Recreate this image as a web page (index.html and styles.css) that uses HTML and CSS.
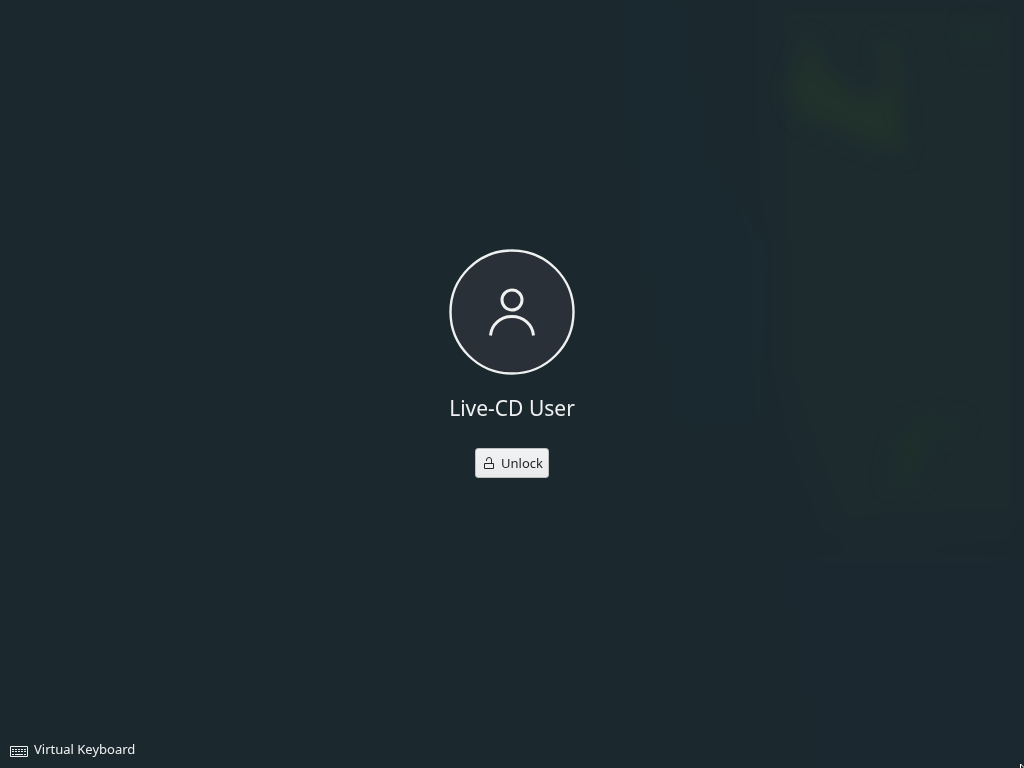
FILE: index.html
```html
<!DOCTYPE html>
<html lang="en">
<head>
<meta charset="utf-8">
<meta name="viewport" content="width=device-width, initial-scale=1">
<title>Lock screen</title>
<link rel="stylesheet" href="styles.css">
</head>
<body class="lockscreen">
<svg class="wallpaper" viewBox="0 0 1024 768" preserveAspectRatio="none" aria-hidden="true">
  <defs>
    <filter id="soft" x="-50%" y="-50%" width="200%" height="200%"><feGaussianBlur stdDeviation="9"/></filter>
    <filter id="haze" x="-50%" y="-50%" width="200%" height="200%"><feGaussianBlur stdDeviation="20"/></filter>
  </defs>
  <g filter="url(#haze)">
    <rect x="-200" y="-200" width="1424" height="1168" fill="#1b292f"/>
    <path d="M620 0h60l30 160 60 90-10 170-80 10-40-180z" fill="#1a2830"/>
    <path d="M770 0h254v520l-190 10-60-170z" fill="#1d2b2f"/>
    <path d="M780 560h244v208H820z" fill="#1c2830"/>
  </g>
  <g filter="url(#soft)">
    <path d="M808 35l20 35 38 28 20-15-8-42 18 5 8 110-45-14-60-26-12-26z" fill="#21312b"/>
    <path d="M965 25h20v22h-20zM915 420h45v14h-28l-18 50h-26l8-40z" fill="#1e2e2a"/>
  </g>
</svg>
<main class="session">
  <svg class="avatar" viewBox="0 0 126 126" fill="none" stroke="currentColor" aria-hidden="true">
    <circle class="avatar-disc" cx="63" cy="63" r="61.5" stroke-width="2.4"/>
    <circle cx="63" cy="51" r="10" stroke-width="3"/>
    <path d="M41.500 86.500C42.500 75.500 51.500 67.500 63 67.500S83.500 75.500 84.500 86.500" stroke-width="3"/>
  </svg>
  <h1 class="user-name">Live-CD User</h1>
  <button class="unlock" type="button">
    <svg class="unlock-icon" viewBox="0 0 10 12" fill="none" stroke="currentColor" aria-hidden="true">
      <path d="M.5 6.500h9v5h-9zM2.500 4V3Q2.500.5 5 .5T7.500 3v3.500"/>
    </svg>
    <span>Unlock</span>
  </button>
</main>
<footer class="footer">
  <button class="keyboard" type="button">
    <svg class="keyboard-icon" viewBox="0 0 18 11" fill="none" stroke="currentColor" aria-hidden="true">
      <path d="M.5.5h17v10H.5z"/>
      <path d="M2 3.500h14M2 5.500h14" stroke-dasharray="2 1"/>
      <path d="M2 8.500h2M5 8.500h8M14 8.500h2"/>
    </svg>
    <span>Virtual Keyboard</span>
  </button>
</footer>
<svg class="pointer" viewBox="0 0 4 4" aria-hidden="true">
  <path d="M0 0h1l3 3v1H0z" fill="#fff"/>
  <path d="M1 1l3 3H1z" fill="#222"/>
</svg>
</body>
</html>
```

FILE: styles.css
```css
* {
  box-sizing: border-box;
}

.lockscreen {
  display: flex;
  flex-direction: column;
  min-height: 100vh;
  margin: 0;
  overflow: hidden;
  color: #eff0f1;
  background: #1b292f;
  font: 13px/20px "Noto Sans", sans-serif;
}

.wallpaper {
  position: fixed;
  inset: 0;
  z-index: -1;
  width: 100%;
  height: 100%;
  color-interpolation-filters: sRGB;
}

.session {
  display: flex;
  flex: 1;
  flex-direction: column;
  align-items: center;
  justify-content: center;
  padding-bottom: 1px;
}

.avatar {
  width: 126px;
  height: 126px;
}

.avatar-disc {
  fill: #2a3037;
}

.user-name {
  margin: 19px 0 26px;
  font-size: 21px;
  font-weight: 400;
  line-height: 28px;
}

.unlock {
  display: flex;
  align-items: center;
  gap: 7px;
  height: 30px;
  padding: 0 5px 0 8px;
  border: 1px solid #bcbebf;
  border-radius: 3px;
  background: linear-gradient(#f1f2f3, #e9eaeb);
  color: #232629;
  font: inherit;
}

.unlock-icon {
  width: 10px;
  height: 12px;
}

.footer {
  display: flex;
  align-items: center;
  height: 40px;
  padding: 2px 10px 0;
}

.keyboard {
  display: flex;
  align-items: center;
  gap: 6px;
  padding: 0;
  border: 0;
  background: none;
  color: inherit;
  font: inherit;
}

.keyboard-icon {
  width: 18px;
  height: 11px;
  margin-top: 4px;
}

.pointer {
  position: absolute;
  right: 0;
  bottom: 0;
  width: 4px;
  height: 4px;
}
```
